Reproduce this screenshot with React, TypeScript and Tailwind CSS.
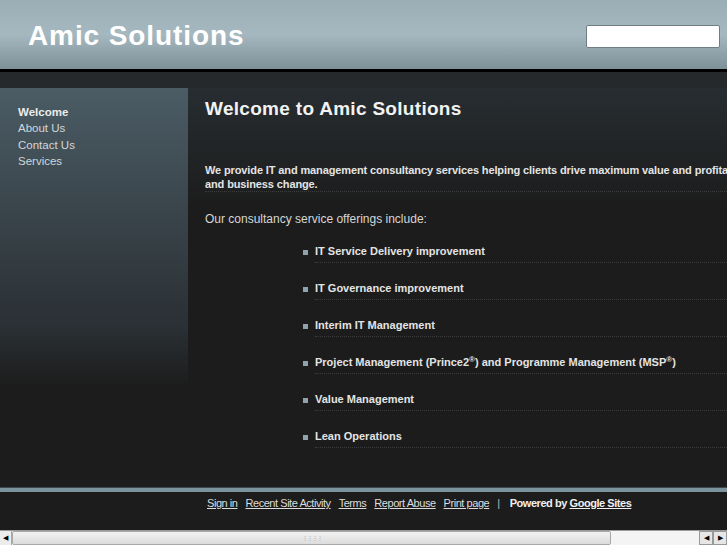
import React from "react"

const services = [
  "IT Service Delivery improvement",
  "IT Governance improvement",
  "Interim IT Management",
  "project",
  "Value Management",
  "Lean Operations",
]

const navItems = ["Welcome", "About Us", "Contact Us", "Services"]

const footerLinks = ["Sign in", "Recent Site Activity", "Terms", "Report Abuse", "Print page"]

function ServiceText({ name }: { name: string }) {
  if (name !== "project") return <>{name}</>
  return (
    <>
      Project Management (Prince2<sup className="text-[8px]">®</sup>) and Programme Management (MSP<sup className="text-[8px]">®</sup>)
    </>
  )
}

export default function App() {
  return (
    <div className="w-[727px] h-[545px] overflow-hidden flex flex-col bg-[#1c1c1c] text-[#e4e4e4] font-['Liberation_Sans',Arial,sans-serif]">
      {/* header */}
      <div className="h-[69px] shrink-0 flex items-center justify-between pl-[28px] pr-[7px] pt-[3px] bg-gradient-to-b from-[#9aaeb6] via-[#a6b8bf] to-[#7d9199]">
        <h1 className="text-[28px] font-bold tracking-[0.9px] text-white leading-none">Amic Solutions</h1>
        <input className="w-[134px] h-[23px] bg-white border border-[#6f7d84] rounded-[2px]" />
      </div>
      <div className="h-[3px] shrink-0 bg-black" />
      <div className="h-[16px] shrink-0 bg-[#26292b]" />

      {/* body */}
      <div className="h-[399px] shrink-0 flex">
        <div className="w-[188px] shrink-0 bg-gradient-to-b from-[#4b5c65] via-[#2a3034] via-60% to-[#1c1c1c] to-75% pt-[16px] pl-[18px]">
          <ul className="text-[11.5px] leading-[16.3px]">
            {navItems.map((item, i) => (
              <li key={item} className={i === 0 ? "font-bold text-[#ececec]" : "text-[#d2d7da]"}>{item}</li>
            ))}
          </ul>
        </div>
        <div className="flex-1 min-w-0 bg-gradient-to-b from-[#272d31] to-[#1c1c1c] to-30% pl-[17px] pt-[10px] overflow-hidden">
          <h2 className="text-[19px] font-bold leading-[22px] tracking-[0.3px] text-[#f2f2f2] whitespace-nowrap">Welcome to Amic Solutions</h2>
          <p className="mt-[43px] text-[11px] font-bold leading-[14px] tracking-[-0.12px] whitespace-nowrap w-[900px] border-b border-dotted border-[#3c3c3c]">
            We provide IT and management consultancy services helping clients drive maximum value and profitability from IT
            <br />
            and business change.
          </p>
          <p className="mt-[20px] text-[12px] leading-[15px] text-[#d6d6d6]">Our consultancy service offerings include:</p>
          <ul className="mt-[17px] ml-[98px]">
            {services.map((s) => (
              <li key={s} className="flex items-start gap-[7px] mb-[18px]">
                <span className="w-[5px] h-[5px] bg-[#8ea3ab] mt-[6px] shrink-0" />
                <span className="block w-[600px] text-[11px] font-bold leading-[15px] pb-[3px] border-b border-dotted border-[#3c3c3c] whitespace-nowrap">
                  <ServiceText name={s} />
                </span>
              </li>
            ))}
          </ul>
        </div>
      </div>

      {/* footer */}
      <div className="h-[1px] shrink-0 bg-[#3f4a4f]" />
      <div className="h-[4px] shrink-0 bg-[#7a939c]" />
      <div className="h-[38px] shrink-0 bg-[#1c1c1c] flex items-start pt-[4px] pl-[207px] text-[11px] leading-[14px] tracking-[-0.45px] whitespace-nowrap">
        {footerLinks.map((l) => (
          <a key={l} className="underline text-[#dcdcdc] mr-[8px]">{l}</a>
        ))}
        <span className="text-[#bbb] mr-[10px]">|</span>
        <span className="font-bold text-[#f0f0f0]">Powered by <a className="underline">Google Sites</a></span>
      </div>

      {/* scrollbar */}
      <div className="h-[15px] shrink-0 flex bg-[#f4f4f4] border-t border-[#9a9a9a]">
        <div className="w-[12px] flex items-center justify-center border-r border-[#aaa] bg-[#ececec] text-[7px] text-black">◀</div>
        <div className="w-[599px] flex items-center justify-center bg-gradient-to-b from-[#f2f2f2] to-[#dcdcdc] border border-[#a8a8a8] rounded-[2px]">
          <span className="text-[6px] leading-none text-[#aaa] tracking-[-1px]">⋮⋮⋮⋮</span>
        </div>
        <div className="flex-1" />
        <div className="w-[14px] flex items-center justify-center border border-[#999] bg-[#e6e6e6] text-[7px] text-black">◀</div>
        <div className="w-[14px] flex items-center justify-center border border-[#999] bg-[#e6e6e6] text-[7px] text-black">▶</div>
      </div>
    </div>
  )
}
